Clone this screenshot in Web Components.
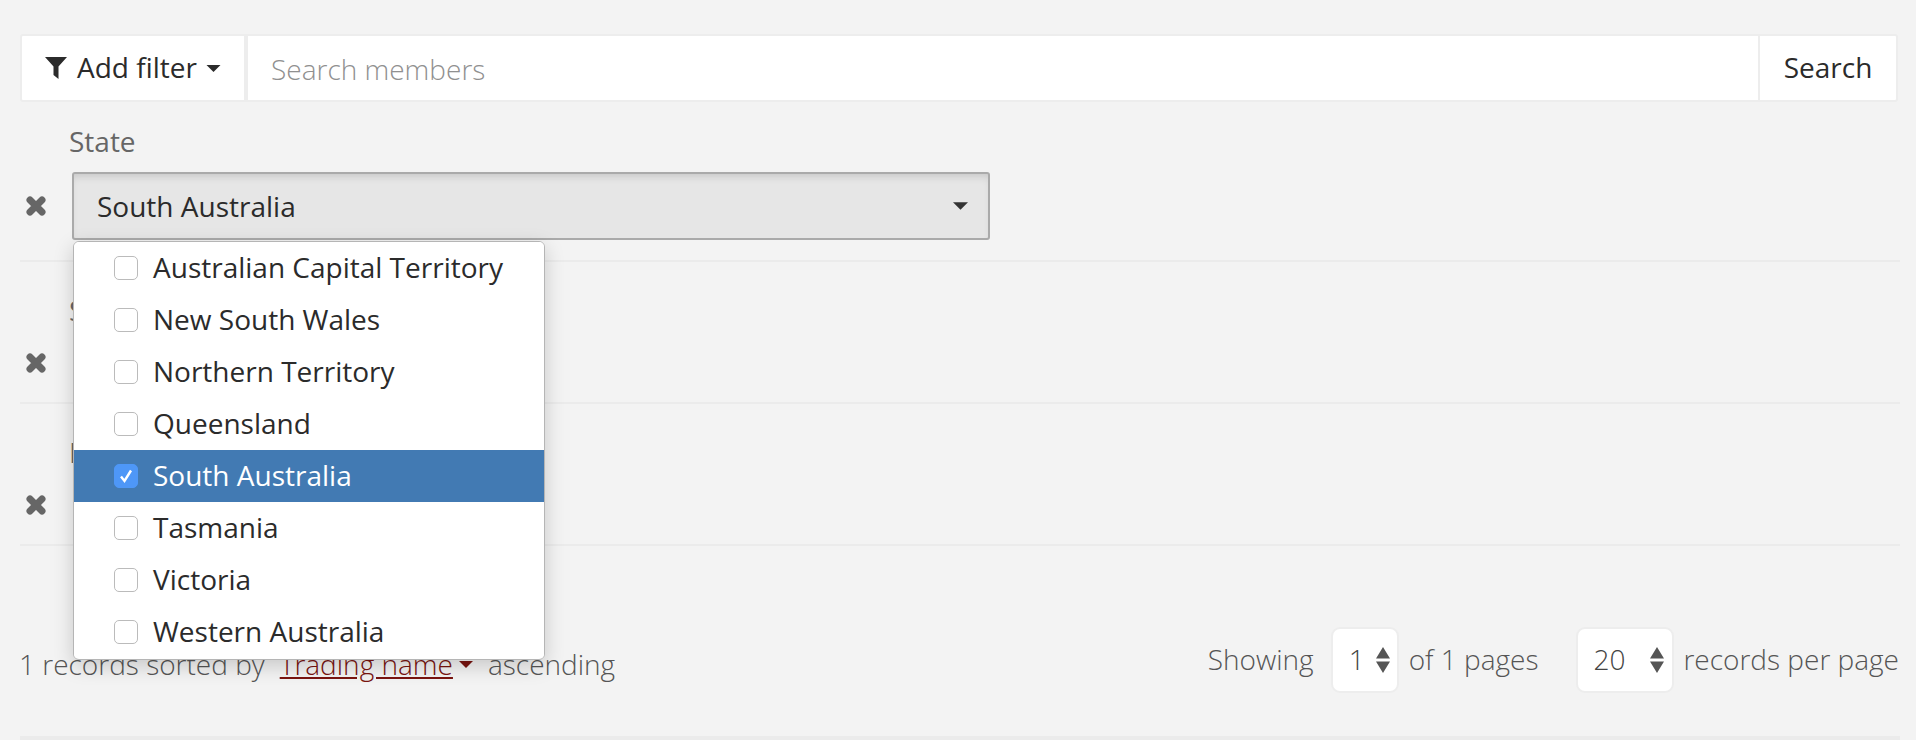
<!DOCTYPE html>
<html>
<head>
<meta charset="utf-8">
<style>
html, body { margin: 0; padding: 0; background: #f3f3f3; }
body { font-family: "Open Sans", sans-serif; font-size: 28px; color: #666; }
</style>
</head>
<body>
<member-search></member-search>

<script>
const svgCaret = (w, h, fill) => `<svg width="${w}" height="${h}" viewBox="0 0 10 5"><path d="M0 0h10L5 5z" fill="${fill}"/></svg>`;

const searchTemplate = document.createElement('template');
searchTemplate.innerHTML = `
<style>
 :host { display: flex; height: 68px; margin-right: 2px; }
 .filter { width: 226px; flex: none; background: #fff; display: flex; align-items: center; padding-left: 23px; box-sizing: border-box; color: #2b2b2b; border: 2px solid #ededed; border-radius: 3px 0 0 3px; }
 .filter span { margin: 0 9px 2px 10px; }
 .group { flex: 1; display: flex; background: #fff; border: 2px solid #ededed; border-radius: 0 3px 3px 0; }
 .input { flex: 1; color: #909090; font-weight: 300; padding: 2px 0 0 23px; display: flex; align-items: center; }
 .go { width: 138px; flex: none; border-left: 2px solid #ededed; box-sizing: border-box; color: #2b2b2b; display: flex; align-items: center; justify-content: center; padding-bottom: 2px; }
</style>
<div class="filter">
  <svg width="22" height="22" viewBox="0 0 22 22"><path d="M0 0h22L13.5 9.5V22L8.5 18V9.500z" fill="#2b2b2b"/></svg>
  <span>Add filter</span>
  ${svgCaret(15, 7, '#2b2b2b')}
</div>
<div class="group">
  <div class="input">Search members</div>
  <div class="go">Search</div>
</div>
`;
class SearchBar extends HTMLElement {
  constructor() {
    super();
    this.attachShadow({ mode: 'open' });
    this.shadowRoot.appendChild(searchTemplate.content.cloneNode(true));
  }
}
window.customElements.define('search-bar', SearchBar);

const rowTemplate = document.createElement('template');
rowTemplate.innerHTML = `
<style>
 :host { display: block; border-bottom: 2px solid #ebebeb; padding-bottom: 17px; }
 .label { padding-left: 49px; line-height: 36px; height: 38px; margin-bottom: 11px; color: #666; }
 .line { display: flex; align-items: center; gap: 26px; padding-left: 6px; min-height: 44px; }
 .x { width: 20px; height: 20px; flex: none; }
</style>
<div class="label"><slot name="label"></slot></div>
<div class="line">
  <svg class="x" viewBox="0 0 20 20"><path d="M4 4L16 16M16 4L4 16" fill="none" stroke="#666" stroke-width="7" stroke-linecap="round"/></svg>
  <slot></slot>
</div>
`;
class FilterRow extends HTMLElement {
  constructor() {
    super();
    this.attachShadow({ mode: 'open' });
    this.shadowRoot.appendChild(rowTemplate.content.cloneNode(true));
  }
}
window.customElements.define('filter-row', FilterRow);

const selectTemplate = document.createElement('template');
selectTemplate.innerHTML = `
<style>
 :host { display: flex; width: 918px; height: 68px; box-sizing: border-box; align-items: center; justify-content: space-between; border: 2px solid #aaa; border-radius: 3px; background: #e6e6e6; box-shadow: inset 0 6px 8px -4px rgba(0,0,0,.15); color: #2b2b2b; padding: 0 20px 0 23px; }
</style>
<span><slot></slot></span>
${svgCaret(15, 8, '#333')}
`;
class MultiSelect extends HTMLElement {
  constructor() {
    super();
    this.attachShadow({ mode: 'open' });
    this.shadowRoot.appendChild(selectTemplate.content.cloneNode(true));
  }
}
window.customElements.define('multi-select', MultiSelect);

const optionTemplate = document.createElement('template');
optionTemplate.innerHTML = `
<style>
 :host { display: flex; align-items: center; height: 52px; padding-left: 40px; gap: 15px; color: #2b2b2b; background: #fff; }
 :host([checked]) { background: #427ab3; color: #fff; }
 .text { padding-bottom: 2px; }
 .box { width: 24px; height: 24px; box-sizing: border-box; border: 1.5px solid #bbb; border-radius: 5px; background: #fff; display: flex; align-items: center; justify-content: center; }
 :host([checked]) .box { background: #4e97f7; border-color: #4e97f7; }
 svg { display: none; }
 :host([checked]) svg { display: block; }
</style>
<span class="box"><svg width="14" height="16" viewBox="0 0 14 16"><path d="M2 8.5L5.5 13L12 2.5" fill="none" stroke="#fff" stroke-width="2.4"/></svg></span>
<span class="text"><slot></slot></span>
`;
class SelectOption extends HTMLElement {
  constructor() {
    super();
    this.attachShadow({ mode: 'open' });
    this.shadowRoot.appendChild(optionTemplate.content.cloneNode(true));
  }
}
window.customElements.define('select-option', SelectOption);

const menuTemplate = document.createElement('template');
menuTemplate.innerHTML = `
<style>
 :host { position: absolute; left: 73px; top: 241px; width: 472px; height: 419px; box-sizing: border-box; background: #fff; border: 1px solid #b5b5b5; border-radius: 6px; box-shadow: 0 6px 20px rgba(0,0,0,.18); overflow: hidden; display: block; z-index: 5; }
</style>
<slot></slot>
`;
class SelectMenu extends HTMLElement {
  constructor() {
    super();
    this.attachShadow({ mode: 'open' });
    this.shadowRoot.appendChild(menuTemplate.content.cloneNode(true));
  }
}
window.customElements.define('select-menu', SelectMenu);

const pagerTemplate = document.createElement('template');
pagerTemplate.innerHTML = `
<style>
 :host { display: inline-flex; align-items: center; justify-content: space-between; height: 66px; box-sizing: border-box; background: #fff; border: 2px solid #ededed; border-radius: 9px; color: #444; font-weight: 300; padding: 0 var(--pad-right, 8px) 0 var(--pad-left, 15px); }
 span { padding-bottom: 2px; }
</style>
<span><slot></slot></span>
<svg width="14" height="26" viewBox="0 0 14 26"><path d="M7 0L14 11.500H0zM7 26L0 14.500H14z" fill="#555"/></svg>
`;
class PageSelect extends HTMLElement {
  constructor() {
    super();
    this.attachShadow({ mode: 'open' });
    this.shadowRoot.appendChild(pagerTemplate.content.cloneNode(true));
  }
}
window.customElements.define('page-select', PageSelect);

const footerTemplate = document.createElement('template');
footerTemplate.innerHTML = `
<style>
 :host { display: flex; align-items: center; justify-content: space-between; padding-top: 81px; margin-right: 1px; font-weight: 300; color: #555; }
 .sort { display: flex; align-items: center; gap: 15px; padding-top: 18px; margin-left: -1px; }
 a { color: #7a1410; text-decoration: underline; }
 .sortlink { display: inline-flex; align-items: center; gap: 6px; }
 .pages { display: flex; align-items: center; gap: 12px; }
 .pages > span { padding-bottom: 2px; }
 .first { width: 68px; margin: 0 -2px 0 5px; --pad-left: 16px; --pad-right: 7px; }
 .second { width: 98px; margin: 0 -3px 0 26px; }
</style>
<div class="sort"><span>1 records sorted by</span><span class="sortlink"><a>Trading name</a>${svgCaret(14, 7, '#7a1410')}</span><span>ascending</span></div>
<div class="pages"><span>Showing</span><page-select class="first">1</page-select><span>of 1 pages</span><page-select class="second">20</page-select><span>records per page</span></div>
`;
class ResultFooter extends HTMLElement {
  constructor() {
    super();
    this.attachShadow({ mode: 'open' });
    this.shadowRoot.appendChild(footerTemplate.content.cloneNode(true));
  }
}
window.customElements.define('result-footer', ResultFooter);

const pageTemplate = document.createElement('template');
pageTemplate.innerHTML = `
<style>
 :host { display: flex; flex-direction: column; position: relative; height: 740px; box-sizing: border-box; padding: 34px 16px 0 20px; overflow: hidden; }
 .state { margin-top: 21px; padding-bottom: 20px; }
 .status { padding-top: 30px; }
 .industry { padding-top: 30px; }
 result-footer { flex: 1; align-items: flex-start; }
 .end { height: 4px; background: #ebebeb; }
</style>
<search-bar></search-bar>
<filter-row class="state"><span slot="label">State</span><multi-select>South Australia</multi-select></filter-row>
<filter-row class="status"><span slot="label">Status</span></filter-row>
<filter-row class="industry"><span slot="label">Industry</span></filter-row>
<result-footer></result-footer>
<select-menu>
  <select-option>Australian Capital Territory</select-option>
  <select-option>New South Wales</select-option>
  <select-option>Northern Territory</select-option>
  <select-option>Queensland</select-option>
  <select-option checked>South Australia</select-option>
  <select-option>Tasmania</select-option>
  <select-option>Victoria</select-option>
  <select-option>Western Australia</select-option>
</select-menu>
<div class="end"></div>
`;
class MemberSearch extends HTMLElement {
  constructor() {
    super();
    this.attachShadow({ mode: 'open' });
    this.shadowRoot.appendChild(pageTemplate.content.cloneNode(true));
  }
}
window.customElements.define('member-search', MemberSearch);
</script>
</body>
</html>
